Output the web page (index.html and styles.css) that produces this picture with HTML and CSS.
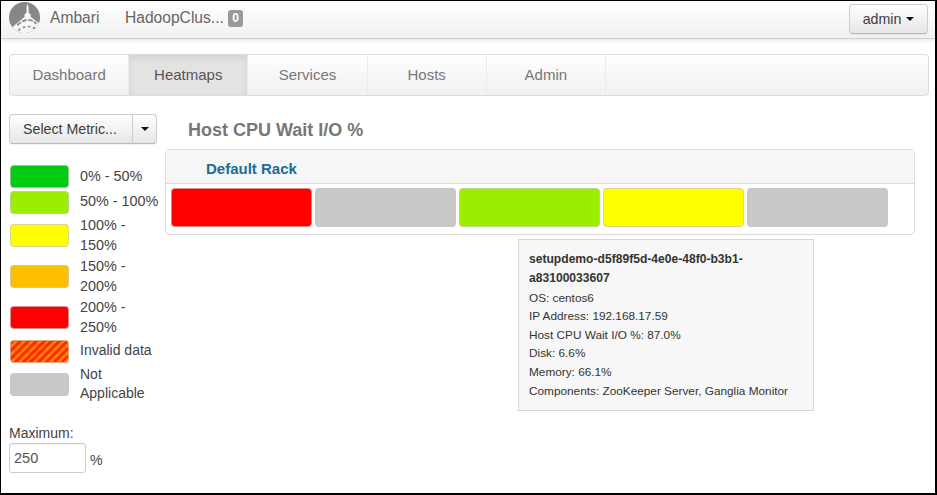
FILE: index.html
```html
<!DOCTYPE html>
<html lang="en">
<head>
<meta charset="utf-8">
<title>Ambari - Heatmaps</title>
<link rel="stylesheet" href="styles.css">
</head>
<body>
<div class="frame">
  <header class="topbar">
    <svg class="logo" viewBox="0 0 30 30" aria-hidden="true">
      <defs><clipPath id="disc"><circle cx="15" cy="15" r="15"/></clipPath></defs>
      <g clip-path="url(#disc)">
        <rect width="30" height="30" fill="#878787"/>
        <path fill="#f6f6f6" d="M18 1.500L19 5V10.500L21 12V14.500L30 21V30H4L2.500 25L15 14.500V12L17 10.500V5Z"/>
        <path fill="none" stroke="#8b8b8b" stroke-width="1.800" stroke-dasharray="4.500 1.500" d="M8 22.500Q18 13 26.500 21"/>
        <path fill="none" stroke="#999" stroke-width="1.900" stroke-dasharray="2.500 2.500" d="M9 27.500Q17 21 26 26"/>
      </g>
    </svg>
    <span class="brand">Ambari</span>
    <span class="cluster">HadoopClus...</span>
    <span class="badge">0</span>
    <button class="btn user">admin<i class="caret"></i></button>
  </header>

  <nav class="tabs">
    <a class="tab">Dashboard</a>
    <a class="tab active">Heatmaps</a>
    <a class="tab">Services</a>
    <a class="tab">Hosts</a>
    <a class="tab">Admin</a>
  </nav>

  <main class="content">
    <aside class="side">
      <div class="split">
        <button class="btn metric">Select Metric...</button>
        <button class="btn drop"><i class="caret"></i></button>
      </div>
      <ul class="legend">
        <li class="row"><i class="swatch green"></i><span>0% - 50%</span></li>
        <li class="row"><i class="swatch lime"></i><span>50% - 100%</span></li>
        <li class="row tall"><i class="swatch yellow"></i><span>100% -<br>150%</span></li>
        <li class="row tall"><i class="swatch orange"></i><span>150% -<br>200%</span></li>
        <li class="row tall"><i class="swatch red"></i><span>200% -<br>250%</span></li>
        <li class="row"><i class="swatch invalid"></i><span class="narrow">Invalid data</span></li>
        <li class="row tall"><i class="swatch gray"></i><span class="narrow">Not<br>Applicable</span></li>
      </ul>
      <label class="max-label" for="max">Maximum:</label>
      <div class="max"><input id="max" type="text" value="250"><span>%</span></div>
    </aside>

    <section class="heatmap">
      <h1 class="title">Host CPU Wait I/O %</h1>
      <div class="rack">
        <div class="rack-head"><span>Default Rack</span></div>
        <div class="hosts">
          <div class="host red"></div>
          <div class="host gray"></div>
          <div class="host lime"></div>
          <div class="host yellow"></div>
          <div class="host gray"></div>
        </div>
        <div class="tip">
          <b>setupdemo-d5f89f5d-4e0e-48f0-b3b1-<br>a83100033607</b>
          <span>OS: centos6</span>
          <span>IP Address: 192.168.17.59</span>
          <span>Host CPU Wait I/O %: 87.0%</span>
          <span>Disk: 6.6%</span>
          <span>Memory: 66.1%</span>
          <span>Components: ZooKeeper Server, Ganglia Monitor</span>
        </div>
      </div>
    </section>
  </main>
</div>
</body>
</html>
```
FILE: styles.css
```css
* { box-sizing: border-box; }
body {
  margin: 0;
  background: #fff;
  color: #444;
  font: 14.2px/20px "Liberation Sans", Arial, sans-serif;
}
.frame {
  width: 937px;
  height: 495px;
  border: solid #000;
  border-width: 1px 2px 2px 1px;
  overflow: hidden;
}

.topbar {
  display: flex;
  align-items: flex-start;
  height: 38px;
  padding-left: 8px;
  background: linear-gradient(#fff, #f1f1f1);
  border-bottom: 1px solid #cfcfcf;
  box-shadow: 0 1px 4px rgba(0, 0, 0, .12);
}
.logo { width: 31px; height: 31px; margin-top: 1px; }
.brand, .cluster {
  margin-top: 7px;
  font-size: 15.6px;
  color: #666;
  white-space: nowrap;
}
.brand { width: 75px; margin-left: 10px; }
.cluster { width: 100px; }
.badge {
  width: 15px;
  height: 17px;
  margin: 9px 0 0 3px;
  border-radius: 3px;
  background: #999;
  color: #fff;
  font: bold 12px/17px "Liberation Sans", Arial, sans-serif;
  text-align: center;
}

.btn {
  display: flex;
  align-items: center;
  justify-content: center;
  height: 30px;
  padding: 0;
  border: 1px solid #cdcdcd;
  border-bottom-color: #b8b8b8;
  border-radius: 4px;
  background: linear-gradient(#fff, #e6e6e6);
  box-shadow: 0 1px 1px rgba(0, 0, 0, .06);
  color: #3c3c3c;
  font: 14.2px/20px "Liberation Sans", Arial, sans-serif;
  white-space: nowrap;
}
.user { width: 79px; margin: 3px 7px 0 auto; }
.caret {
  border: solid transparent;
  border-width: 4px 4px 0;
  border-top-color: #111;
}
.user .caret { margin-left: 5px; }

.tabs {
  display: flex;
  width: 920px;
  height: 42px;
  margin: 15px 0 0 8px;
  border: 1px solid #dcdcdc;
  border-radius: 4px;
  background: linear-gradient(#fff, #f0f0f0);
}
.tab {
  width: 119.2px;
  height: 40px;
  border-right: 1px solid #ebebeb;
  color: #777;
  font-size: 15px;
  line-height: 39px;
  text-align: center;
}
.tab.active {
  background: #e3e3e3;
  box-shadow: inset 0 2px 6px rgba(0, 0, 0, .09);
  color: #555;
}

.content { display: flex; }
.side { width: 156px; padding: 18px 0 0 8px; }
.split { display: flex; }
.metric { width: 124px; padding-right: 2px; border-radius: 4px 0 0 4px; }
.drop { width: 25px; margin-left: -1px; border-radius: 0 4px 4px 0; }

.legend { margin: 20px 0 0; padding: 0 0 0 1px; list-style: none; }
.row {
  display: flex;
  align-items: center;
  height: 25.5px;
  font-size: 14.4px;
  white-space: nowrap;
}
.row.tall { height: 41.1px; }
.row span { margin-left: 11px; line-height: 19.6px; }
.row .narrow { font-size: 14px; }
.swatch {
  flex: none;
  width: 59px;
  height: 23px;
  border: 1px solid rgba(200, 200, 200, .7);
  border-radius: 4px;
}
.green { background-color: #00cb10; }
.lime { background-color: #9bee00; }
.yellow { background-color: #ff0; }
.orange { background-color: #ffbf00; }
.red { background-color: #f00; }
.gray { background-color: #c8c8c8; }
.invalid {
  background: repeating-linear-gradient(135deg, #ff2a00 0 2.750px, #ff7c00 2.750px 5.500px);
}

.max-label { display: block; margin-top: 18px; font-size: 14px; }
.max { display: flex; align-items: center; }
.max input {
  width: 77px;
  height: 30px;
  padding: 0 4px;
  border: 1px solid #ccc;
  border-radius: 3px;
  box-shadow: inset 0 1px 1px rgba(0, 0, 0, .07);
  color: #555;
  font: 14.5px "Liberation Sans", Arial, sans-serif;
}
.max span { margin: 5px 0 0 4px; }

.heatmap { width: 750px; margin-left: 8px; padding-top: 24px; }
.title {
  margin: 0 0 8px 23px;
  color: #777;
  font-size: 18px;
  line-height: 21px;
}
.rack {
  position: relative;
  height: 86px;
  border: 1px solid #dcdcdc;
  border-radius: 4px;
}
.rack-head {
  height: 34px;
  padding-left: 40px;
  border-bottom: 1px solid #dcdcdc;
  background: #f6f6f6;
  color: #1a6c9b;
  font-weight: bold;
  font-size: 15px;
  line-height: 38px;
}
.hosts { display: flex; gap: 3.200px; padding: 4px 0 0 4.500px; }
.host {
  width: 141px;
  height: 39px;
  border: 1px solid rgba(200, 200, 200, .7);
  border-radius: 4px;
}
.tip {
  position: absolute;
  top: 89px;
  left: 352px;
  width: 296px;
  height: 172px;
  padding: 10px 0 0 10px;
  border: 1px solid #d5d5d5;
  background: #f7f7f7;
  color: #333;
  font-size: 11.8px;
  line-height: 18.600px;
  white-space: nowrap;
}
.tip b, .tip span { display: block; }
.tip b { font-size: 12.1px; line-height: 19.300px; }
```
